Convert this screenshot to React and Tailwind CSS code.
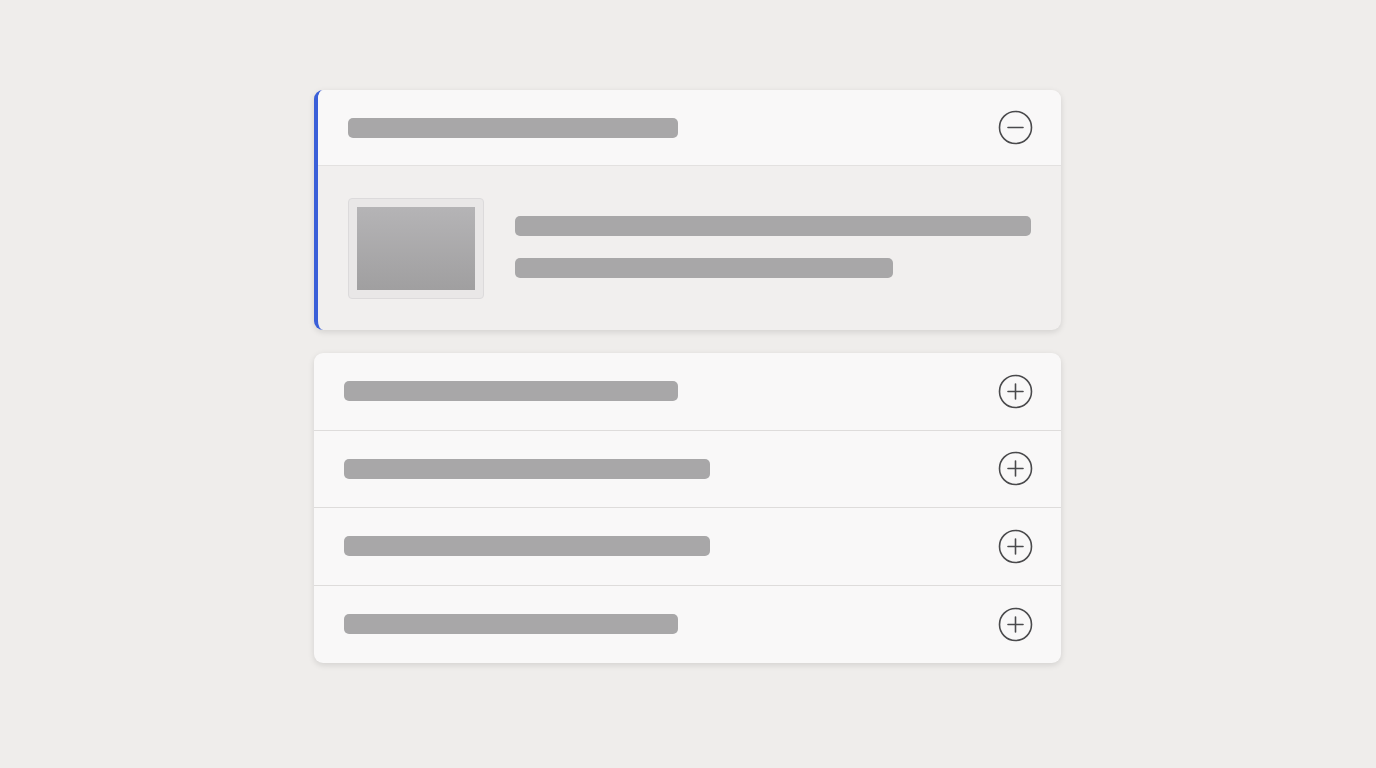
import { useState } from 'react';

const items = [
  { id: 'a', bar: 'w-[334px]' },
  { id: 'b', bar: 'w-[366px]' },
  { id: 'c', bar: 'w-[366px]' },
  { id: 'd', bar: 'w-[334px]' },
];

function CircleIcon({ open }) {
  return (
    <svg width="35" height="35" viewBox="0 0 35 35" fill="none" className="shrink-0">
      <circle cx="17.5" cy="17.5" r="16" stroke="#4a4a4c" strokeWidth="1.6" />
      <path d="M10 17.5h15" stroke="#4a4a4c" strokeWidth="1.6" strokeLinecap="round" />
      {!open && <path d="M17.5 10v15" stroke="#4a4a4c" strokeWidth="1.6" strokeLinecap="round" />}
    </svg>
  );
}

export default function App() {
  const [open, setOpen] = useState(true);

  return (
    <div className="min-h-screen w-full bg-[#efedeb] flex flex-col items-center pt-[90px] font-['Inter',sans-serif]">
      <div className="w-[747px] ml-[-1px] flex flex-col gap-[23px]">
        {/* expanded item */}
        <div className="rounded-[9px] overflow-hidden bg-[#f1efee] border-l-4 border-[#3a5fd8] shadow-[0_2px_6px_rgba(0,0,0,0.12)]">
          <button
            type="button"
            onClick={() => setOpen(!open)}
            className="w-full h-[76px] flex items-center justify-between pl-[30px] pr-[28px] bg-[#f9f8f8] border-b border-[#e3e1e0]"
          >
            <span className="block w-[330px] h-[20px] rounded-[5px] bg-[#a8a7a8]" />
            <CircleIcon open={open} />
          </button>
          {open && (
            <div className="h-[164px] flex items-center pl-[30px] pr-[30px] gap-[31px]">
              <div className="w-[136px] h-[101px] rounded-[4px] border border-[#dcdadb] bg-[#e9e7e7] p-[8px] flex">
                <div className="flex-1 bg-gradient-to-b from-[#b5b4b6] to-[#a09fa0]" />
              </div>
              <div className="flex-1 flex flex-col gap-[22px] pb-[2px]">
                <span className="block w-full h-[20px] rounded-[5px] bg-[#a8a7a8]" />
                <span className="block w-[378px] h-[20px] rounded-[5px] bg-[#a8a7a8]" />
              </div>
            </div>
          )}
        </div>

        {/* collapsed items */}
        <div className="rounded-[9px] overflow-hidden bg-[#f9f8f8] shadow-[0_2px_6px_rgba(0,0,0,0.12)]">
          {items.map((it, i) => (
            <div
              key={it.id}
              className={`h-[77.5px] flex items-center justify-between pl-[30px] pr-[28px] ${i < items.length - 1 ? 'border-b border-[#dedcdb]' : ''}`}
            >
              <span className={`block ${it.bar} h-[20px] rounded-[5px] bg-[#a8a7a8]`} />
              <CircleIcon open={false} />
            </div>
          ))}
        </div>
      </div>
    </div>
  );
}
